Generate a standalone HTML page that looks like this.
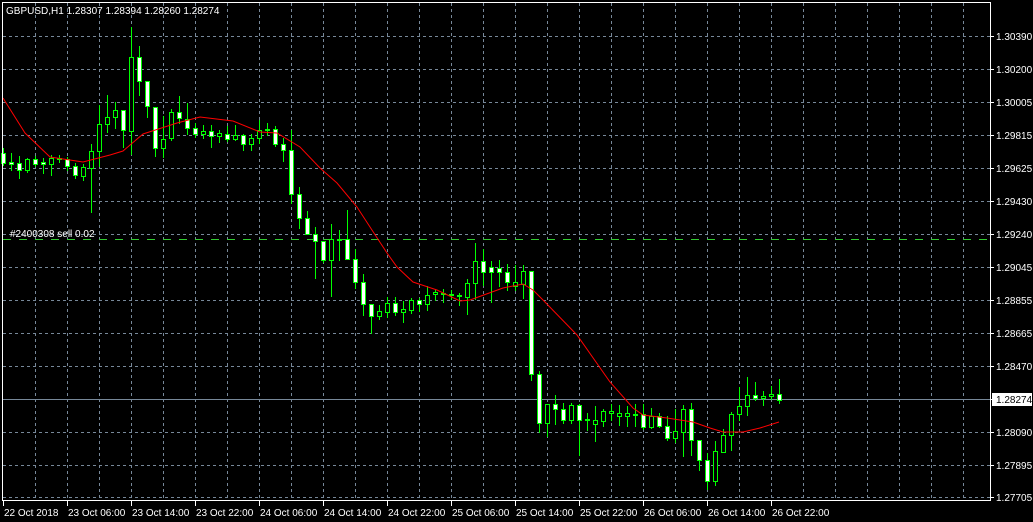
<!DOCTYPE html>
<html><head><meta charset="utf-8"><style>
html,body{margin:0;padding:0;background:#000;width:1033px;height:522px;overflow:hidden}
svg{display:block}
text{font-family:"Liberation Sans",sans-serif;font-size:10px;fill:#fff}
</style></head><body>
<svg width="1033" height="522" xmlns="http://www.w3.org/2000/svg" shape-rendering="crispEdges">
<defs>
<pattern id="p1" x="0" y="0" width="8" height="522" patternUnits="userSpaceOnUse"><rect x="1" y="0" width="5" height="522" fill="#fff"/></pattern>
<pattern id="p2" x="0" y="0" width="8" height="522" patternUnits="userSpaceOnUse"><rect x="2" y="0" width="3" height="522" fill="#fff"/></pattern>
<mask id="m1" maskUnits="userSpaceOnUse" x="0" y="0" width="1033" height="522"><rect width="1033" height="522" fill="url(#p1)"/></mask>
<mask id="m2" maskUnits="userSpaceOnUse" x="0" y="0" width="1033" height="522"><rect width="1033" height="522" fill="url(#p2)"/></mask>
</defs>
<rect width="1033" height="522" fill="#000"/>
<path fill="none" stroke="#778899" stroke-dasharray="3,3" d="M35.5 3V500M67.5 3V500M99.5 3V500M131.5 3V500M163.5 3V500M195.5 3V500M227.5 3V500M259.5 3V500M291.5 3V500M323.5 3V500M355.5 3V500M387.5 3V500M419.5 3V500M451.5 3V500M483.5 3V500M515.5 3V500M547.5 3V500M579.5 3V500M611.5 3V500M643.5 3V500M675.5 3V500M707.5 3V500M739.5 3V500M771.5 3V500M803.5 3V500M835.5 3V500M867.5 3V500M899.5 3V500M931.5 3V500M963.5 3V500M3 36.5H990M3 69.5H990M3 102.5H990M3 135.5H990M3 168.5H990M3 201.5H990M3 234.5H990M3 267.5H990M3 300.5H990M3 333.5H990M3 366.5H990M3 432.5H990M3 465.5H990M3 497.5H990"/>
<path fill="none" stroke="#fff" d="M990 36.5h4M990 69.5h4M990 102.5h4M990 135.5h4M990 168.5h4M990 201.5h4M990 234.5h4M990 267.5h4M990 300.5h4M990 333.5h4M990 366.5h4M990 399.5h4M990 432.5h4M990 465.5h4M990 497.5h4M3.5 501v5M67.5 501v5M131.5 501v5M195.5 501v5M259.5 501v5M323.5 501v5M387.5 501v5M451.5 501v5M515.5 501v5M579.5 501v5M643.5 501v5M707.5 501v5M771.5 501v5"/>
<g>
<text x="996" y="40">1.30390</text><text x="996" y="73">1.30200</text><text x="996" y="106">1.30005</text><text x="996" y="139">1.29815</text><text x="996" y="172">1.29625</text><text x="996" y="205">1.29430</text><text x="996" y="238">1.29240</text><text x="996" y="271">1.29045</text><text x="996" y="304">1.28855</text><text x="996" y="337">1.28665</text><text x="996" y="370">1.28470</text><text x="996" y="436">1.28090</text><text x="996" y="469">1.27895</text><text x="996" y="501">1.27705</text>
<text x="4" y="516">22 Oct 2018</text><text x="68" y="516">23 Oct 06:00</text><text x="132" y="516">23 Oct 14:00</text><text x="196" y="516">23 Oct 22:00</text><text x="260" y="516">24 Oct 06:00</text><text x="324" y="516">24 Oct 14:00</text><text x="388" y="516">24 Oct 22:00</text><text x="452" y="516">25 Oct 06:00</text><text x="516" y="516">25 Oct 14:00</text><text x="580" y="516">25 Oct 22:00</text><text x="644" y="516">26 Oct 06:00</text><text x="708" y="516">26 Oct 14:00</text><text x="772" y="516">26 Oct 22:00</text>
</g>
<path fill="none" stroke="#32cd32" stroke-dasharray="8,8" d="M3 239.5H990"/>
<text x="10" y="237">#2400308 sell 0.02</text>
<path fill="none" stroke="#778899" d="M3 399.5H990"/>
<path mask="url(#m1)" fill="#00ff00" d="M3 148h1V166h-1zM0 153h7V164h-7zM11 153h1V171h-1zM8 162h7V165h-7zM19 156h1V179h-1zM16 163h7V171h-7zM27 158h1V173h-1zM24 159h7V171h-7zM35 156h1V167h-1zM32 159h7V165h-7zM43 158h1V174h-1zM40 162h7V165h-7zM51 155h1V176h-1zM48 158h7V165h-7zM59 155h1V163h-1zM56 158h7V160h-7zM67 157h1V171h-1zM64 159h7V167h-7zM75 163h1V179h-1zM72 166h7V176h-7zM83 164h1V181h-1zM80 167h7V177h-7zM91 144h1V213h-1zM88 151h7V169h-7zM99 105h1V167h-1zM96 124h7V152h-7zM107 95h1V133h-1zM104 117h7V125h-7zM115 102h1V129h-1zM112 110h7V118h-7zM123 110h1V148h-1zM120 110h7V131h-7zM131 27h1V155h-1zM128 57h7V132h-7zM139 46h1V96h-1zM136 57h7V82h-7zM147 81h1V118h-1zM144 81h7V107h-7zM155 107h1V157h-1zM152 107h7V149h-7zM163 116h1V158h-1zM160 139h7V149h-7zM171 109h1V141h-1zM168 112h7V139h-7zM179 96h1V124h-1zM176 112h7V119h-7zM187 103h1V135h-1zM184 119h7V129h-7zM195 123h1V138h-1zM192 128h7V135h-7zM203 125h1V139h-1zM200 131h7V135h-7zM211 125h1V148h-1zM208 131h7V137h-7zM219 130h1V143h-1zM216 133h7V137h-7zM227 126h1V142h-1zM224 134h7V140h-7zM235 125h1V141h-1zM232 135h7V140h-7zM243 134h1V151h-1zM240 135h7V145h-7zM251 134h1V151h-1zM248 138h7V145h-7zM259 120h1V144h-1zM256 130h7V139h-7zM267 123h1V136h-1zM264 129h7V131h-7zM275 126h1V147h-1zM272 129h7V145h-7zM283 138h1V162h-1zM280 144h7V151h-7zM291 130h1V204h-1zM288 150h7V195h-7zM299 187h1V229h-1zM296 194h7V219h-7zM307 211h1V235h-1zM304 218h7V235h-7zM315 227h1V279h-1zM312 234h7V242h-7zM323 241h1V263h-1zM320 241h7V261h-7zM331 224h1V297h-1zM328 239h7V261h-7zM339 230h1V261h-1zM336 239h7V241h-7zM347 210h1V260h-1zM344 239h7V260h-7zM355 249h1V289h-1zM352 259h7V283h-7zM363 274h1V316h-1zM360 282h7V305h-7zM371 304h1V334h-1zM368 304h7V317h-7zM379 305h1V320h-1zM376 311h7V317h-7zM387 297h1V318h-1zM384 303h7V313h-7zM395 297h1V316h-1zM392 303h7V313h-7zM403 301h1V323h-1zM400 309h7V313h-7zM411 298h1V314h-1zM408 300h7V311h-7zM419 298h1V312h-1zM416 300h7V305h-7zM427 286h1V311h-1zM424 295h7V305h-7zM435 289h1V301h-1zM432 292h7V295h-7zM443 289h1V303h-1zM440 293h7V295h-7zM451 290h1V300h-1zM448 294h7V296h-7zM459 293h1V306h-1zM456 295h7V297h-7zM467 279h1V315h-1zM464 283h7V298h-7zM475 243h1V300h-1zM472 261h7V284h-7zM483 249h1V286h-1zM480 261h7V273h-7zM491 261h1V303h-1zM488 267h7V273h-7zM499 260h1V287h-1zM496 268h7V273h-7zM507 264h1V291h-1zM504 272h7V283h-7zM515 265h1V291h-1zM512 282h7V287h-7zM523 265h1V299h-1zM520 271h7V285h-7zM531 271h1V381h-1zM528 271h7V375h-7zM539 371h1V433h-1zM536 374h7V424h-7zM547 404h1V437h-1zM544 404h7V424h-7zM555 395h1V425h-1zM552 404h7V410h-7zM563 403h1V424h-1zM560 409h7V421h-7zM571 403h1V424h-1zM568 405h7V421h-7zM579 404h1V456h-1zM576 405h7V421h-7zM587 413h1V431h-1zM584 419h7V421h-7zM595 406h1V442h-1zM592 420h7V425h-7zM603 409h1V427h-1zM600 411h7V422h-7zM611 404h1V421h-1zM608 411h7V414h-7zM619 405h1V426h-1zM616 413h7V417h-7zM627 406h1V427h-1zM624 413h7V417h-7zM635 404h1V427h-1zM632 414h7V416h-7zM643 404h1V430h-1zM640 414h7V428h-7zM651 408h1V429h-1zM648 416h7V428h-7zM659 413h1V428h-1zM656 416h7V427h-7zM667 416h1V441h-1zM664 426h7V439h-7zM675 409h1V443h-1zM672 431h7V439h-7zM683 405h1V457h-1zM680 409h7V433h-7zM691 403h1V456h-1zM688 409h7V441h-7zM699 440h1V471h-1zM696 440h7V461h-7zM707 453h1V490h-1zM704 460h7V482h-7zM715 441h1V486h-1zM712 451h7V482h-7zM723 429h1V453h-1zM720 435h7V453h-7zM731 412h1V451h-1zM728 414h7V436h-7zM739 387h1V421h-1zM736 406h7V415h-7zM747 377h1V416h-1zM744 395h7V407h-7zM755 382h1V401h-1zM752 395h7V399h-7zM763 391h1V406h-1zM760 396h7V399h-7zM771 386h1V400h-1zM768 394h7V397h-7zM779 379h1V404h-1zM776 394h7V401h-7z"/>
<path mask="url(#m2)" fill="#fff" d="M1 154h5V163h-5zM9 163h5V164h-5zM17 164h5V170h-5zM33 160h5V164h-5zM41 163h5V164h-5zM65 160h5V166h-5zM73 167h5V175h-5zM121 111h5V130h-5zM137 58h5V81h-5zM145 82h5V106h-5zM153 108h5V148h-5zM177 113h5V118h-5zM185 120h5V128h-5zM193 129h5V134h-5zM209 132h5V136h-5zM225 135h5V139h-5zM241 136h5V144h-5zM273 130h5V144h-5zM281 145h5V150h-5zM289 151h5V194h-5zM297 195h5V218h-5zM305 219h5V234h-5zM313 235h5V241h-5zM321 242h5V260h-5zM345 240h5V259h-5zM353 260h5V282h-5zM361 283h5V304h-5zM369 305h5V316h-5zM393 304h5V312h-5zM417 301h5V304h-5zM481 262h5V272h-5zM489 268h5V272h-5zM497 269h5V272h-5zM505 273h5V282h-5zM529 272h5V374h-5zM537 375h5V423h-5zM553 405h5V409h-5zM561 410h5V420h-5zM577 406h5V420h-5zM641 415h5V427h-5zM657 417h5V426h-5zM665 427h5V438h-5zM689 410h5V440h-5zM697 441h5V460h-5zM705 461h5V481h-5zM753 396h5V398h-5zM777 395h5V400h-5z"/>
<path mask="url(#m2)" fill="#000" d="M25 160h5V170h-5zM49 159h5V164h-5zM81 168h5V176h-5zM89 152h5V168h-5zM97 125h5V151h-5zM105 118h5V124h-5zM113 111h5V117h-5zM129 58h5V131h-5zM161 140h5V148h-5zM169 113h5V138h-5zM201 132h5V134h-5zM217 134h5V136h-5zM233 136h5V139h-5zM249 139h5V144h-5zM257 131h5V138h-5zM329 240h5V260h-5zM377 312h5V316h-5zM385 304h5V312h-5zM401 310h5V312h-5zM409 301h5V310h-5zM425 296h5V304h-5zM433 293h5V294h-5zM465 284h5V297h-5zM473 262h5V283h-5zM513 283h5V286h-5zM521 272h5V284h-5zM545 405h5V423h-5zM569 406h5V420h-5zM593 421h5V424h-5zM601 412h5V421h-5zM609 412h5V413h-5zM617 414h5V416h-5zM625 414h5V416h-5zM649 417h5V427h-5zM673 432h5V438h-5zM681 410h5V432h-5zM713 452h5V481h-5zM721 436h5V452h-5zM729 415h5V435h-5zM737 407h5V414h-5zM745 396h5V406h-5zM761 397h5V398h-5zM769 395h5V396h-5z"/>
<polyline fill="none" stroke="#ff0000" shape-rendering="auto" points="3,98 25,133 50,157 83,162 110,155 123,151 143,134 177,123 200,117 233,121 260,132 277,133 300,147 320,168 337,183 357,207 370,227 387,253 397,267 413,282 437,290 460,301 470,300 503,288 523,284 533,290 543,300 577,335 610,382 633,408 643,415 667,418 693,422 710,428 723,432 743,432 760,428 779,422"/>
<rect x="2.5" y="2.5" width="988" height="498" fill="none" stroke="#fff"/>
<text x="6" y="14">GBPUSD,H1  1.28307 1.28394 1.28260 1.28274</text>
<rect x="992" y="393" width="40" height="13" fill="#fff"/>
<text x="996" y="403" style="fill:#000">1.28274</text>
</svg>
</body></html>
